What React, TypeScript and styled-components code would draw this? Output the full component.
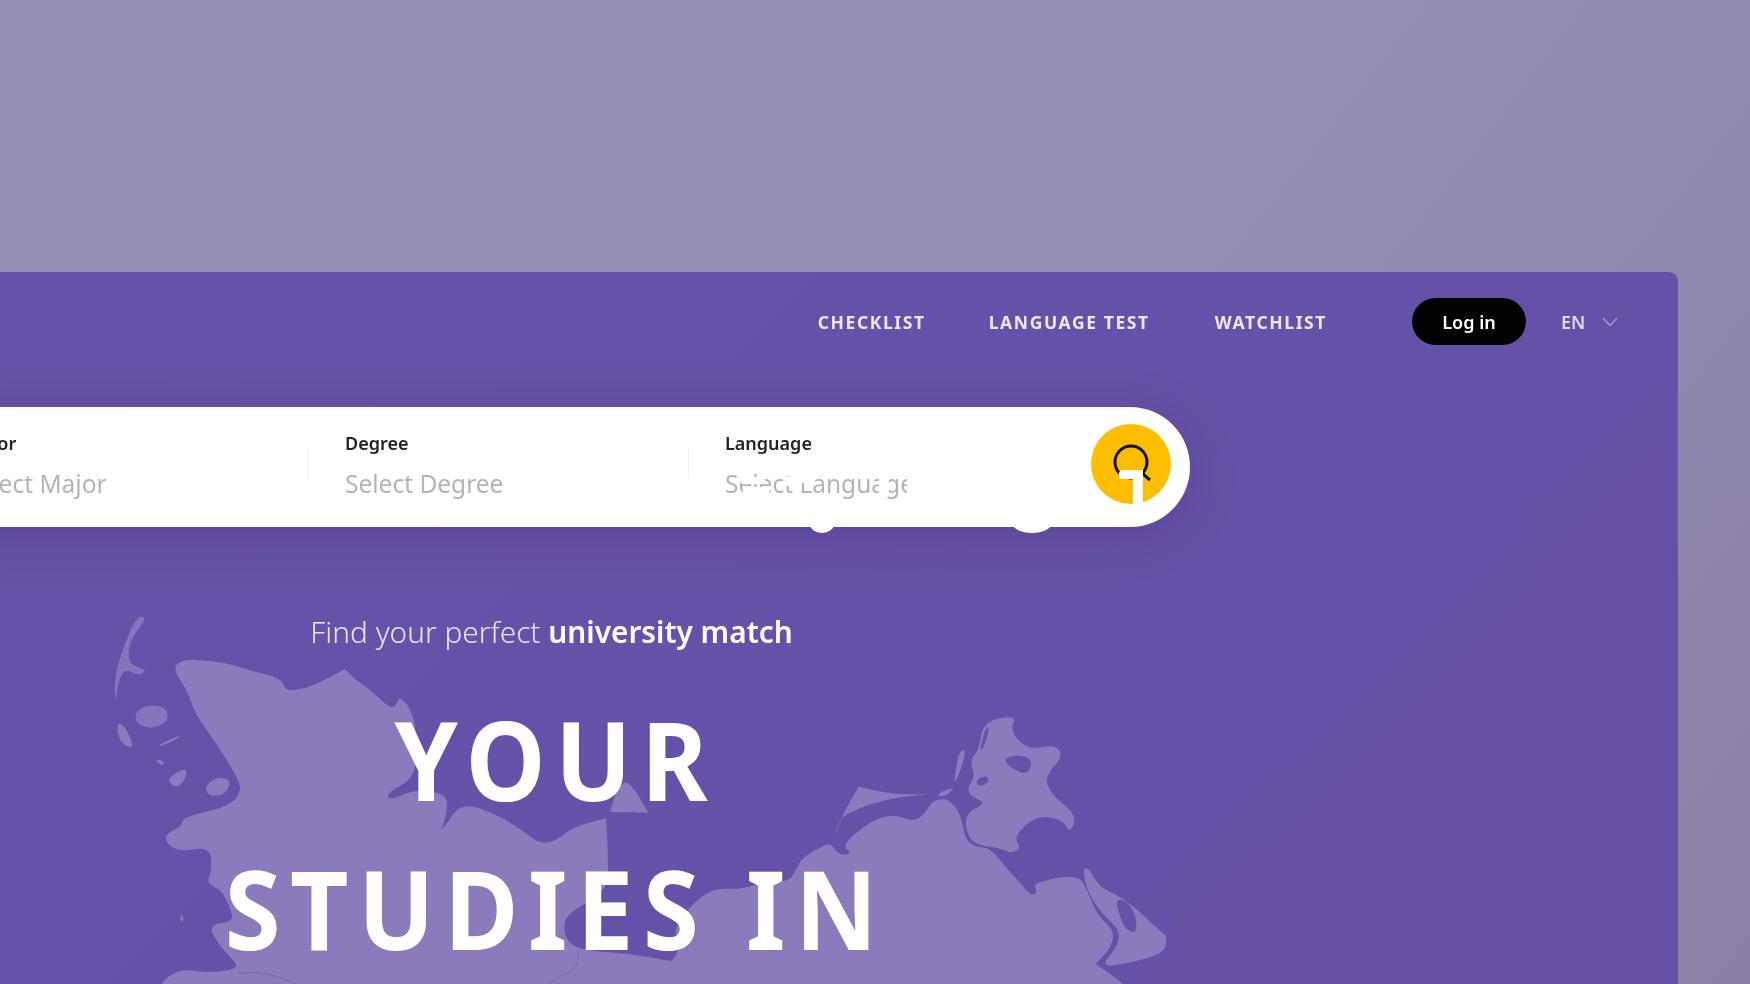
import React from "react";
import styled, { createGlobalStyle } from "styled-components";

const Global = createGlobalStyle`
  html, body { margin: 0; padding: 0; height: 100%; }
  body { font-family: "Noto Sans", "Liberation Sans", sans-serif; overflow: hidden; background: #9890b5; }
  #root { height: 100%; }
`;

const Page = styled.div`
  width: 1750px;
  height: 984px;
  overflow: hidden;
  padding-top: 272px;
  box-sizing: border-box;
  background: linear-gradient(128deg, #978fb5 0%, #968eb4 55%, #8a80a4 100%);
  filter: blur(0.7px);
`;

const Card = styled.section`
  position: relative;
  width: 1678px;
  height: 712px;
  border-top-right-radius: 9px;
  background: linear-gradient(135deg, #6752a9 0%, #6651a8 70%, #6650a5 100%);
`;

const MapArt = styled.svg`
  position: absolute;
  left: 0;
  top: 0;
  width: 1678px;
  height: 712px;
`;

const Content = styled.div`
  position: relative;
`;

const Nav = styled.nav`
  display: flex;
  align-items: center;
  justify-content: flex-end;
  height: 99px;
  padding: 0 60px 0 0;
  box-sizing: border-box;
`;

const NavLink = styled.a<{ $gap: number }>`
  font-size: 17.5px;
  font-weight: 700;
  letter-spacing: 1.6px;
  color: #ece8f6;
  margin-right: ${(p) => p.$gap}px;
  font-family: "Noto Sans", sans-serif;
`;

const Login = styled.button`
  width: 114px;
  height: 47px;
  border: 0;
  border-radius: 24px;
  background: #000;
  color: #fff;
  font: 600 18px "Noto Sans", sans-serif;
  margin-right: 35px;
`;

const Lang = styled.div`
  display: flex;
  align-items: center;
  width: 57px;
  justify-content: space-between;
  font-size: 18px;
  font-weight: 600;
  color: #ded9ee;
`;

const SearchBar = styled.div`
  position: relative;
  display: flex;
  align-items: center;
  height: 120px;
  width: 1261px;
  margin: 36px 0 0 -71px;
  background: #fff;
  border-radius: 60px;
  box-shadow: 0 8px 46px rgba(62, 40, 110, 0.3);
`;

const Field = styled.div<{ $last?: boolean }>`
  width: 380px;
  flex: none;
  box-sizing: border-box;
  padding: 0 0 4px 36px;
  position: relative;
  &::after {
    content: "";
    display: ${(p) => (p.$last ? "none" : "block")};
    position: absolute;
    right: 0;
    top: 16px;
    height: 32px;
    width: 1px;
    background: #f1f1f1;
  }
`;

const Label = styled.div`
  font-size: 18px;
  font-weight: 600;
  line-height: 24px;
  color: #222;
`;

const Value = styled.div`
  margin-top: 14px;
  font-size: 24.5px;
  line-height: 30px;
  color: #b4b4b4;
`;

const Scratch = styled.i<{ $x: number; $y: number; $w: number; $h: number }>`
  position: absolute;
  left: ${(p) => p.$x}px;
  top: ${(p) => p.$y}px;
  width: ${(p) => p.$w}px;
  height: ${(p) => p.$h}px;
  background: #fff;
  border-radius: 2px;
`;

const Bump = styled.i<{ $x: number; $w: number }>`
  position: absolute;
  left: ${(p) => p.$x}px;
  bottom: -6px;
  width: ${(p) => p.$w}px;
  height: 18px;
  border-radius: 50%;
  background: #fff;
`;

const GoButton = styled.button`
  position: absolute;
  right: 19px;
  top: 17px;
  width: 80px;
  height: 80px;
  padding: 0;
  border: 0;
  border-radius: 50%;
  background: #ffbd00;
  overflow: hidden;
`;

const Hero = styled.header`
  width: 1108px;
  text-align: center;
  color: #fff;
  margin-top: 85px;
`;

const Tagline = styled.p`
  margin: 0;
  padding-right: 5px;
  font-size: 29.8px;
  line-height: 40px;
  font-weight: 300;
  color: #e8e4f4;
  b {
    font-weight: 600;
    color: #fff;
  }
`;

const Title = styled.h1`
  margin: 32px 0 0;
  padding-left: 4px;
  font-size: 109px;
  line-height: 149px;
  font-weight: 700;
  letter-spacing: 10.2px;
  word-spacing: 2px;
  color: #fff;
  transform: scaleX(0.93);
`;

type P = [number, number];
const Z4 = (p: P): P => [80 + p[0] / 2.613, 590 + p[1] / 3];
const Z5 = (p: P): P => [650 + p[0] / 2.613, 680 + p[1] / 3];

const smooth = (pts: P[]) => {
  const n = pts.length;
  const mid = (a: P, b: P): P => [(a[0] + b[0]) / 2, (a[1] + b[1]) / 2];
  const s = mid(pts[n - 1], pts[0]);
  let d = `M${s[0].toFixed(1)} ${s[1].toFixed(1)}`;
  for (let i = 0; i < n; i++) {
    const m = mid(pts[i], pts[(i + 1) % n]);
    d += `Q${pts[i][0].toFixed(1)} ${pts[i][1].toFixed(1)} ${m[0].toFixed(1)} ${m[1].toFixed(1)}`;
  }
  return d + "Z";
};
const shape4 = (pts: P[]) => smooth(pts.map(Z4));
const shape5 = (pts: P[]) => smooth(pts.map(Z5));

const mainland: P[] = [
  ...([
    [243, 240], [262, 208], [340, 212], [400, 225], [440, 240], [528, 265], [535, 303], [590, 295], [640, 270], [692, 237], [692, 237],
    [720, 270], [760, 300], [800, 345], [820, 355], [835, 325], [835, 325], [860, 345], [880, 420], [880, 560], [800, 610], [810, 632],
    [870, 600], [930, 605], [958, 622], [960, 660], [945, 718], [945, 718], [965, 690], [985, 655], [1020, 645], [1100, 680], [1160, 725],
    [1200, 760], [1240, 755], [1290, 710], [1375, 685], [1375, 685], [1380, 800], [1380, 900], [1290, 960], [1265, 990], [1265, 1040], [1300, 1080],
    [1430, 1090], [1530, 1110],
  ] as P[]).map(Z4),
  ...([
    [60, 845], [78, 800], [60, 745], [120, 660], [170, 625], [240, 628], [300, 605], [365, 605], [385, 560], [400, 530],
    [472, 485], [482, 512], [505, 526], [527, 520], [505, 500], [530, 465], [590, 415], [640, 405], [690, 425], [720, 400],
    [735, 365], [770, 355], [790, 370], [810, 400], [825, 480], [850, 500], [890, 505], [925, 555], [960, 600], [1000, 652],
    [1012, 630], [1000, 610], [1120, 580], [1145, 640], [1172, 710], [1212, 750], [1207, 800], [1165, 852], [1165, 852], [1240, 912], [1300, 1000],
  ] as P[]).map(Z5),
  ...([
    [200, 1250], [205, 1182], [260, 1135], [340, 1150], [415, 1135], [400, 1110], [360, 1060], [335, 1005], [400, 995], [395, 960],
    [370, 900], [330, 880], [345, 840], [340, 770], [260, 785], [225, 760], [225, 730], [265, 710], [270, 680], [390, 650],
    [425, 600], [400, 540], [350, 450], [300, 370], [280, 300],
  ] as P[]).map(Z4),
];

const islandsLeft: P[][] = [
  [[150, 75], [175, 85], [145, 125], [125, 175], [130, 225], [178, 240], [150, 258], [120, 235], [100, 270], [92, 350], [90, 260], [115, 165]],
  [[140, 375], [170, 345], [225, 350], [232, 392], [195, 415], [155, 408]],
  [[98, 398], [118, 408], [142, 474], [116, 468], [98, 435]],
  [[204, 465], [262, 435], [258, 445], [210, 470]],
  [[195, 510], [215, 510], [222, 525], [205, 520]],
  [[226, 565], [282, 530], [272, 578], [246, 593]],
  [[325, 590], [355, 562], [395, 568], [382, 612], [338, 620]],
  [[1385, 665], [1385, 665], [1405, 590], [1435, 570], [1485, 668], [1485, 668]],
  [[262, 975], [270, 975], [270, 995], [262, 995]],
];

const islandsRight: P[][] = [
  [[545, 320], [545, 320], [640, 345], [750, 340], [650, 352], [590, 366], [510, 402], [492, 430], [478, 480], [505, 400]],
  [[870, 125], [960, 105], [940, 150], [985, 210], [1060, 193], [1080, 230], [1030, 290], [1050, 345], [1100, 390], [1112, 425], [1095, 458], [1080, 420], [1010, 405], [950, 470], [970, 505], [945, 520], [915, 505], [855, 495], [830, 470], [822, 400], [880, 370], [840, 350], [828, 325], [850, 290], [835, 240], [860, 210]],
  [[810, 210], [826, 210], [812, 270], [795, 315], [798, 270]],
  [[750, 340], [795, 322], [785, 338], [760, 352]],
  [[1130, 570], [1145, 560], [1172, 620], [1240, 655], [1350, 770], [1350, 770], [1345, 820], [1250, 850], [1175, 862], [1222, 800], [1228, 750], [1180, 700], [1145, 640]],
];

const holes: P[][] = [
  [[920, 230], [998, 225], [992, 285], [945, 268]],
  [[878, 140], [888, 145], [868, 215], [862, 205]],
  [[850, 300], [880, 285], [888, 305], [860, 322]],
  [[1215, 655], [1250, 665], [1272, 715], [1270, 762], [1240, 745], [1228, 710]],
];

const Germany = () => (
  <MapArt viewBox="0 272 1678 712" aria-hidden>
    <g fill="#8b7bbd">
      <path d={smooth(mainland)} />
      {islandsLeft.map((s, i) => (
        <path key={i} d={shape4(s)} opacity={i === 0 || i === 1 || i === 8 ? 0.85 : 1} />
      ))}
      {islandsRight.map((s, i) => (
        <path key={i} d={shape5(s)} />
      ))}
    </g>
    <g fill="#6752a9">
      {holes.map((s, i) => (
        <path key={i} d={shape5(s)} />
      ))}
    </g>
    <g fill="none" stroke="#7865b3" strokeWidth="1">
      <path d="M238 973Q270 970 295 984" />
      <path d="M577 950Q582 962 570 972Q556 978 548 984" />
    </g>
  </MapArt>
);

const SearchGlyph = () => (
  <svg width="80" height="80" viewBox="0 0 80 80" fill="none" aria-hidden>
    <circle cx="40" cy="38" r="16" stroke="#111" strokeWidth="3" />
    <path d="M52 50L59 56" stroke="#111" strokeWidth="3" />
    <path d="M28 55V50Q28 46 32 46H52V81H42V55Z" fill="#fff" />
  </svg>
);

const Chevron = () => (
  <svg width="16" height="10" viewBox="0 0 16 10" fill="none" aria-hidden>
    <path d="M1 1L8 8.5L15 1" stroke="#a99cd0" strokeWidth="1.2" />
  </svg>
);

export default function App() {
  return (
    <Page>
      <Global />
      <Card>
        <Germany />
        <Content>
          <Nav>
            <NavLink $gap={63}>CHECKLIST</NavLink>
            <NavLink $gap={65}>LANGUAGE TEST</NavLink>
            <NavLink $gap={85}>WATCHLIST</NavLink>
            <Login>Log in</Login>
            <Lang>
              EN
              <Chevron />
            </Lang>
          </Nav>
          <SearchBar>
            <Field>
              <Label>Major</Label>
              <Value>Select Major</Value>
            </Field>
            <Field>
              <Label>Degree</Label>
              <Value>Select Degree</Value>
            </Field>
            <Field $last>
              <Label>Language</Label>
              <Value>Select Language</Value>
            </Field>
            <Scratch $x={812} $y={70} $w={24} $h={7} />
            <Scratch $x={814} $y={80} $w={26} $h={8} />
            <Scratch $x={856} $y={70} $w={9} $h={9} />
            <Scratch $x={868} $y={68} $w={10} $h={8} />
            <Scratch $x={950} $y={66} $w={10} $h={24} />
            <Scratch $x={978} $y={68} $w={12} $h={22} />
            <Bump $x={881} $w={24} />
            <Bump $x={1084} $w={38} />
            <GoButton aria-label="Search">
              <SearchGlyph />
            </GoButton>
          </SearchBar>
          <Hero>
            <Tagline>
              Find your perfect <b>university match</b>
            </Tagline>
            <Title>
              YOUR
              <br />
              STUDIES IN
            </Title>
          </Hero>
        </Content>
      </Card>
    </Page>
  );
}
